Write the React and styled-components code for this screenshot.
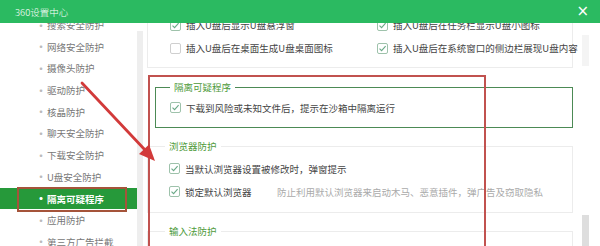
import React from 'react';
import styled, { createGlobalStyle } from 'styled-components';

const GlobalStyle = createGlobalStyle`
  body {
    margin: 0;
    background: #fff;
    font-family: "Noto Sans CJK SC", "Noto Sans", sans-serif;
  }
`;

const navItems = [
  '搜索安全防护',
  '网络安全防护',
  '摄像头防护',
  '驱动防护',
  '核晶防护',
  '聊天安全防护',
  '下载安全防护',
  'U盘安全防护',
  '隔离可疑程序',
  '应用防护',
  '第三方广告拦截',
];

function CheckBox({ checked }) {
  return (
    <Box checked={checked}>
      {checked && (
        <svg width="9" height="9" viewBox="0 0 9 9">
          <path d="M1.5 4.6 L3.6 6.7 L7.6 2.2" fill="none" stroke="#6aa987" strokeWidth="1.1" />
        </svg>
      )}
    </Box>
  );
}

function Option({ checked, children }) {
  return (
    <OptionRow>
      <CheckBox checked={checked} />
      <span>{children}</span>
    </OptionRow>
  );
}

export default function App() {
  return (
    <>
      <GlobalStyle />
      <Window>
        <TitleBar>
          <Title>360设置中心</Title>
          <Close>×</Close>
        </TitleBar>
        <Body>
          <Sidebar>
            <NavList>
              {navItems.map((item) => (
                <NavItem key={item} $active={item === '隔离可疑程序'}>
                  <Bullet $active={item === '隔离可疑程序'}>·</Bullet>
                  {item}
                </NavItem>
              ))}
            </NavList>
          </Sidebar>
          <SideTrack />
          <Main>
            <Card>
              <Grid>
                <Option checked>插入U盘后显示U盘悬浮窗</Option>
                <Option checked>插入U盘后在任务栏显示U盘小图标</Option>
                <Option>插入U盘后在桌面生成U盘桌面图标</Option>
                <Option checked>插入U盘后在系统窗口的侧边栏展现U盘内容</Option>
              </Grid>
            </Card>

            <GroupBox>
              <GroupLegend>隔离可疑程序</GroupLegend>
              <Option checked>下载到风险或未知文件后，提示在沙箱中隔离运行</Option>
            </GroupBox>

            <Section>
              <SectionLegend>浏览器防护</SectionLegend>
              <Option checked>当默认浏览器设置被修改时，弹窗提示</Option>
              <HintRow>
                <HintLabel>
                  <Option checked>锁定默认浏览器</Option>
                </HintLabel>
                <Hint>防止利用默认浏览器来启动木马、恶意插件，弹广告及窃取隐私</Hint>
              </HintRow>
            </Section>

            <Section>
              <SectionLegend>输入法防护</SectionLegend>
              <Option checked>输入法防护</Option>
            </Section>

            <Highlight />
          </Main>
          <ScrollTrack>
            <Thumb />
          </ScrollTrack>
        </Body>
        <Arrow width="600" height="246" viewBox="0 0 600 246">
          <line x1="82" y1="83" x2="146" y2="151" stroke="#d23a3a" strokeWidth="2.8" strokeLinecap="round" />
          <polygon points="155,161 139,154 149,144.5" fill="#d23a3a" />
        </Arrow>
      </Window>
    </>
  );
}

const Window = styled.div`
  position: relative;
  width: 600px;
  height: 246px;
  overflow: hidden;
  background: #fff;
  display: flex;
  flex-direction: column;
`;

const TitleBar = styled.div`
  height: 23px;
  flex-shrink: 0;
  background: #2bba61;
  display: flex;
  align-items: center;
  justify-content: space-between;
  padding: 0 11px 0 15px;
  color: #fff;
  position: relative;
  z-index: 2;
`;

const Title = styled.div`
  font-size: 9.5px;
  line-height: 12px;
  font-weight: 300;
`;

const Close = styled.div`
  font-size: 15px;
  line-height: 12px;
  font-family: "DejaVu Sans", sans-serif;
  margin-top: -2px;
`;

const Body = styled.div`
  flex: 1;
  display: flex;
  min-height: 0;
`;

const Sidebar = styled.div`
  width: 137px;
  flex-shrink: 0;
  background: #fff;
`;

const NavList = styled.div`
  margin-top: -8.8px;
  display: flex;
  flex-direction: column;
`;

const NavItem = styled.div`
  position: relative;
  height: 21.7px;
  display: flex;
  align-items: center;
  padding-left: 35px;
  font-size: 9.5px;
  color: ${(p) => (p.$active ? '#fff' : '#777')};
  background: ${(p) => (p.$active ? '#26993a' : 'transparent')};
  font-weight: ${(p) => (p.$active ? 600 : 400)};

  ${(p) =>
    p.$active &&
    `
    &::after {
      content: '';
      position: absolute;
      left: 17px;
      top: -1px;
      width: 106px;
      height: 21px;
      border: 2px solid #a5543a;
    }
  `}
`;

const Bullet = styled.span`
  width: 12px;
  font-size: 12px;
  color: ${(p) => (p.$active ? '#fff' : '#bbb')};
`;

const SideTrack = styled.div`
  width: 6px;
  flex-shrink: 0;
  margin-top: 8px;
  background: #eeeeee;
`;

const Main = styled.div`
  position: relative;
  width: 434px;
  flex-shrink: 0;
  padding: 0 4px;
  box-sizing: border-box;
  display: flex;
  flex-direction: column;
`;

const Card = styled.div`
  margin-top: -14.5px;
  border: 1px solid #ececec;
  border-top: none;
  padding: 5px 0 7.5px 22px;

  ${() => OptionRow} {
    height: 23px;
  }
`;

const Grid = styled.div`
  display: grid;
  grid-template-columns: 207px 1fr;
`;

const OptionRow = styled.div`
  height: 21px;
  display: flex;
  align-items: center;
  gap: 5px;
  font-size: 9.5px;
  color: #444;
  white-space: nowrap;
`;

const Box = styled.span`
  width: 9px;
  height: 9px;
  border: 1px solid ${(p) => (p.checked ? '#9ec2ab' : '#cfcfcf')};
  border-radius: 2px;
  background: #fff;
  display: flex;
  align-items: center;
  justify-content: center;
  flex-shrink: 0;
`;

const GroupBox = styled.fieldset`
  margin: 13px 0 0 8px;
  padding: 4px 0 9px 14px;
  min-width: 0;
  border: 1.5px solid #4c8a55;
`;

const GroupLegend = styled.legend`
  margin-left: 0;
  padding: 0 4px;
  font-size: 9.5px;
  line-height: 12px;
  color: #4e9a3a;
`;

const Section = styled.fieldset`
  margin: 12px 0 0 0;
  padding: 5px 0 9px 21px;
  min-width: 0;
  border: 1px solid #ececec;

  ${() => OptionRow} {
    height: 23px;
  }
`;

const SectionLegend = styled.legend`
  margin-left: -4px;
  padding: 0 4px;
  font-size: 9.5px;
  line-height: 12px;
  color: #4e9a3a;
`;

const HintRow = styled.div`
  display: flex;
  align-items: center;
`;

const HintLabel = styled.div`
  width: 108px;
  flex-shrink: 0;
`;

const Hint = styled.span`
  font-size: 9.5px;
  color: #aaa;
  white-space: nowrap;
`;

const Highlight = styled.div`
  position: absolute;
  left: 5px;
  top: 52px;
  width: 338px;
  height: 200px;
  box-sizing: border-box;
  border: 2.5px solid #c1524f;
  pointer-events: none;
`;

const ScrollTrack = styled.div`
  flex: 1;
  display: flex;
  flex-direction: column;
  justify-content: flex-end;
  padding: 10px 10px 0 5px;
`;

const Thumb = styled.div`
  width: 7px;
  height: 31px;
  background: #dedede;
  box-shadow: 0 -180px 0 0 #f4f4f4;
`;

const Arrow = styled.svg`
  position: absolute;
  left: 0;
  top: 0;
  pointer-events: none;
`;
